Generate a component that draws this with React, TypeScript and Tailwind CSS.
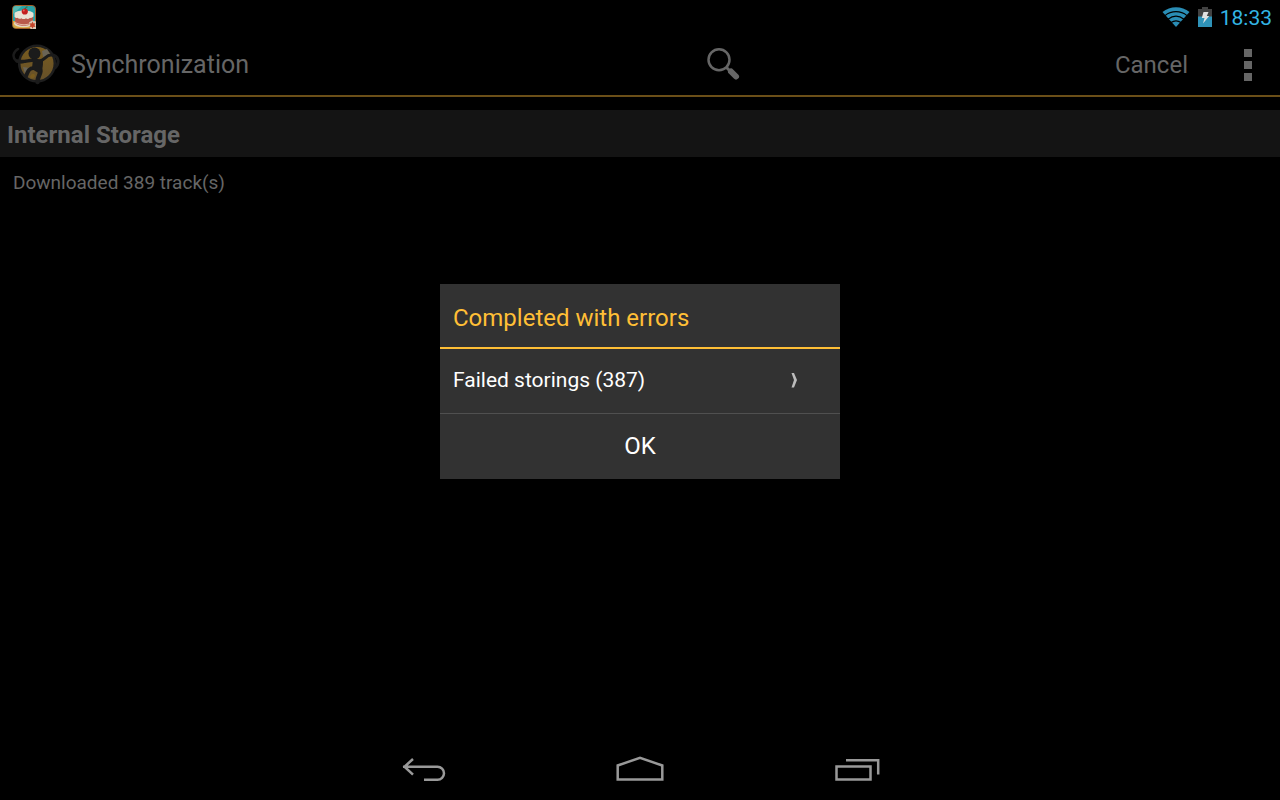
import React from "react";

const CakeIcon = () => (
  <svg className="h-6 w-6" viewBox="0 0 24 24" aria-hidden="true">
    <rect x="0.5" y="0.5" width="23" height="23" rx="3.5" fill="#28a3a8" stroke="#a05a28" />
    <path d="M1 16h22v4a3 3 0 0 1-3 3H4a3 3 0 0 1-3-3z" fill="#d7a640" />
    <path d="M1 4a3 3 0 0 1 3-3h6L1 9z" fill="#57b8b0" />
    <ellipse cx="11.5" cy="18.5" rx="9.5" ry="3.8" fill="#e4d8c4" />
    <path d="M3 9v8c1 5 16 5 18 0V9z" fill="#b95a4c" />
    <path d="M3 16.500c3 3.500 15 3.500 18 0v1c-3 3.500-15 3.500-18 0z" fill="#e6b8a4" />
    <path d="M2.500 8.500C3 4.500 20.500 4.500 21.500 8.500v3c-1.500 1-2 2-3.500 1.200-1.500 1.500-3 1.500-4 .5-1.500 1.200-3.500 1.200-4.500 0-1.500 1-3 .6-4-.5-1.500.5-2.500 0-3-1z" fill="#e9e2d4" />
    <circle cx="12.800" cy="6.500" r="3.100" fill="#c41f1f" />
    <circle cx="11.800" cy="5.500" r="0.900" fill="#e66a5c" />
    <path d="M13 4c.3-1.500 1.200-2 2.500-2" fill="none" stroke="#3f5f20" />
    <path d="M17 17.500l3-2 4 1V24h-5.500z" fill="#d8cbb8" />
    <path d="M20.500 16.500l1 2 2-.2-1 1.800 1 2-2-.3-1 2-1-2-2 .3 1-2-1-1.800 2 .2z" fill="#c4452a" />
  </svg>
);

const MonkeyLogo = () => (
  <svg className="h-12 w-12" viewBox="0 0 48 48" aria-hidden="true">
    <defs>
      <linearGradient id="disc" x1="0" y1="0" x2="0" y2="1">
        <stop offset="0" stopColor="#7a5c1e" />
        <stop offset="1" stopColor="#65502a" />
      </linearGradient>
    </defs>
    <circle cx="25" cy="22.500" r="17.800" fill="url(#disc)" stroke="#1e1e1e" strokeWidth="2.500" />
    <path d="M30 10l5-2 3 5-7 3zM11 26l7 1-5 6z" fill="#6a6456" />
    <g fill="none" stroke="#1b1b1b" strokeLinecap="round" strokeLinejoin="round">
      <path d="M6 8C1 11 0 16 4 19.500c3 2.500 6 2 9 1" strokeWidth="2.500" />
      <path d="M5 20c7 2 11-1 18-1" strokeWidth="3.500" />
      <path d="M28 20c5-1 6-6 11-6 8 0 9 8 4 13" strokeWidth="3" />
      <path d="M22 27c-5 0-6 3-8 8" strokeWidth="4" />
      <path d="M28 28c2 4-2 5-2.500 13" strokeWidth="4.500" />
    </g>
    <circle cx="22.500" cy="12.500" r="6" fill="#1b1b1b" />
    <path d="M21 17l10 2c0 5 0 9-3 14l-8-5z" fill="#1b1b1b" />
    <path d="M18 36c1-4 5-4 5-1-1 3-4 3-5 1z" fill="#7a5c1e" />
  </svg>
);

const WifiIcon = () => (
  <svg className="h-5 w-7" viewBox="0 0 28 20" aria-hidden="true">
    <path d="M0.500 5C8-1.400 20-1.400 27.500 5L14 20z" fill="#2a8db5" />
    <g fill="none" stroke="#000" strokeWidth="1.200">
      <path d="M3 8.600c6.500-5.200 15.500-5.200 22 0" />
      <path d="M6 12.200c5-3.800 11-3.800 16 0" />
      <path d="M9 15.600c3.300-2.400 6.700-2.400 10 0" />
    </g>
  </svg>
);

const BatteryIcon = () => (
  <svg className="h-5 w-3.5" viewBox="0 0 14 20" aria-hidden="true">
    <path d="M4 0h6v2h4v8H0V2h4z" fill="#424242" />
    <path d="M0 9.500h14V20H0z" fill="#2f93b8" />
    <path d="M5.500 5h5L8.800 9h2.400L5 16.500 6.500 11H3.800z" fill="#e2e2e2" />
  </svg>
);

const SearchIcon = () => (
  <svg className="h-9 w-9" viewBox="0 0 36 36" fill="none" stroke="#666" aria-hidden="true">
    <circle cx="14" cy="12.800" r="10.500" strokeWidth="2.500" />
    <path d="M21.500 20.500l4 4" strokeWidth="3" />
    <path d="M26 24.500l5 5" strokeWidth="6" strokeLinecap="round" />
  </svg>
);

const BackIcon = () => (
  <svg className="h-12 w-12" viewBox="0 0 48 48" fill="none" stroke="#999" strokeWidth="2.500" aria-hidden="true">
    <path d="M3 20.700h34.500a6.500 6.500 0 0 1 0 13H24M13 13L4.500 20.700l8.500 8" />
  </svg>
);

const HomeIcon = () => (
  <svg className="h-12 w-12" viewBox="0 0 48 48" fill="none" stroke="#999" strokeWidth="2.500" aria-hidden="true">
    <path d="M1.700 33.500V19.500L24 11.700l22.300 7.800v14z" />
  </svg>
);

const RecentIcon = () => (
  <svg className="h-12 w-12" viewBox="0 0 48 48" fill="none" stroke="#999" strokeWidth="2.500" aria-hidden="true">
    <path d="M4.500 20.500h34v13h-34zM14 14.200h32.200V28.500" />
  </svg>
);

const StatusBar = () => (
  <div className="flex h-[34px] items-center justify-between pl-3 pr-2">
    <CakeIcon />
    <div className="flex items-center gap-2">
      <WifiIcon />
      <BatteryIcon />
      <span className="pt-0.5 text-[21px] leading-8 text-[#33b5e5]">18:33</span>
    </div>
  </div>
);

const ActionBar = () => (
  <header className="flex h-[63px] items-center border-b-2 border-[#6b4f18]">
    <div className="flex w-1/2 items-center gap-[11px] pl-3">
      <MonkeyLogo />
      <h1 className="text-[25px] leading-8 text-[#666]">Synchronization</h1>
    </div>
    <button type="button" aria-label="Search" className="flex w-[166px] justify-center">
      <SearchIcon />
    </button>
    <button type="button" className="ml-auto px-3 text-2xl text-[#666]">
      Cancel
    </button>
    <button type="button" aria-label="More options" className="ml-6 mr-2 flex w-12 flex-col items-center gap-1">
      <span className="size-2 bg-[#666]" />
      <span className="size-2 bg-[#666]" />
      <span className="size-2 bg-[#666]" />
    </button>
  </header>
);

const ErrorDialog = () => (
  <div className="fixed inset-0 flex items-center justify-center pb-[38px]">
    <div
      role="dialog"
      aria-labelledby="dialog-title"
      className="w-[400px] bg-[#323232] text-white"
    >
      <h2
        id="dialog-title"
        className="border-b-2 border-[#ffbf36] px-[13px] pt-[18px] pb-[13px] text-2xl text-[#ffbf36]"
      >
        Completed with errors
      </h2>
      <button
        type="button"
        className="flex h-16 w-full items-center justify-between pl-[13px] pr-10 text-[21px]"
      >
        Failed storings (387)
        <svg className="h-4 w-3" viewBox="0 0 12 16" aria-hidden="true">
          <path d="M3.500 0H6L9 7 6 14.500H3.500L6 7z" fill="#bcbcbc" />
        </svg>
      </button>
      <button
        type="button"
        className="block h-[66px] w-full border-t border-[#505050] text-2xl"
      >
        OK
      </button>
    </div>
  </div>
);

const NavBar = () => (
  <nav className="flex h-[60px] items-center justify-center gap-[168px]">
    <button type="button" aria-label="Back">
      <BackIcon />
    </button>
    <button type="button" aria-label="Home">
      <HomeIcon />
    </button>
    <button type="button" aria-label="Recent apps">
      <RecentIcon />
    </button>
  </nav>
);

export default function App() {
  return (
    <div className="flex min-h-screen flex-col bg-black font-['Roboto',sans-serif]">
      <StatusBar />
      <ActionBar />
      <main className="flex-1 pt-[13px]">
        <h2 className="bg-[#141414] px-[7px] pt-[9px] pb-[6px] text-2xl font-bold text-[#666]">
          Internal Storage
        </h2>
        <p className="px-[13px] py-3 text-[19px] text-[#666]">Downloaded 389 track(s)</p>
      </main>
      <NavBar />
      <ErrorDialog />
    </div>
  );
}
